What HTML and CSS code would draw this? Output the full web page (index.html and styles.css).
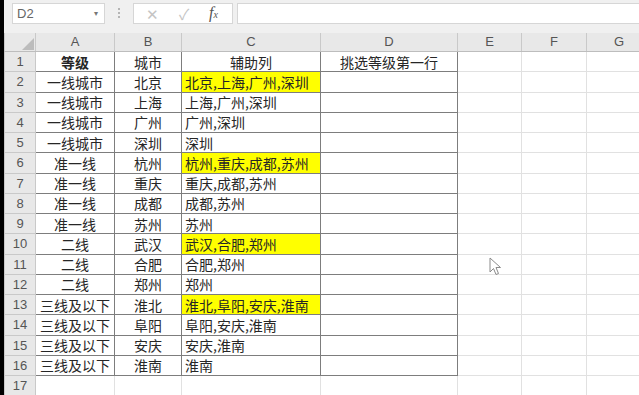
FILE: index.html
```html
<!DOCTYPE html>
<html lang="zh-CN">
<head>
  <meta charset="UTF-8">
  <link rel="stylesheet" href="styles.css">
  <title>等级筛选</title>
</head>
<body>
  <div class="app">
    <div class="toolbar">
      <div class="namebox">D2<span class="caret">&#9662;</span></div>
      <div class="dots"><i></i><i></i><i></i></div>
      <div class="fbtns">
        <span class="fx-btn grey">&#10005;</span>
        <span class="fx-btn grey">&#10003;</span>
        <span class="fx-btn fx"><i>f</i><sub>x</sub></span>
      </div>
      <div class="finput"></div>
    </div>

    <table class="sheet">
      <colgroup>
        <col style="width:31px"><col style="width:79px"><col style="width:67px"><col style="width:139px">
        <col style="width:137px"><col style="width:64px"><col style="width:65px"><col style="width:65px">
      </colgroup>
      <thead>
        <tr>
          <th class="corner"><span class="tri"></span></th>
          <th>A</th><th>B</th><th>C</th><th>D</th><th>E</th><th>F</th><th>G</th>
        </tr>
      </thead>
      <tbody id="rows"></tbody>
    </table>

    <svg class="cursor" width="14" height="20" viewBox="0 0 14 20">
      <path d="M1 1 L1 15 L4.5 11.5 L7 17.5 L9.5 16.5 L7 10.5 L11.5 10.5 Z" fill="#fff" stroke="#8a8a8a" stroke-width="1"/>
    </svg>
  </div>

  <script>
    const data = [
      ['等级', '城市', '辅助列', '挑选等级第一行'],
      ['一线城市', '北京', '北京,上海,广州,深圳', ''],
      ['一线城市', '上海', '上海,广州,深圳', ''],
      ['一线城市', '广州', '广州,深圳', ''],
      ['一线城市', '深圳', '深圳', ''],
      ['准一线', '杭州', '杭州,重庆,成都,苏州', ''],
      ['准一线', '重庆', '重庆,成都,苏州', ''],
      ['准一线', '成都', '成都,苏州', ''],
      ['准一线', '苏州', '苏州', ''],
      ['二线', '武汉', '武汉,合肥,郑州', ''],
      ['二线', '合肥', '合肥,郑州', ''],
      ['二线', '郑州', '郑州', ''],
      ['三线及以下', '淮北', '淮北,阜阳,安庆,淮南', ''],
      ['三线及以下', '阜阳', '阜阳,安庆,淮南', ''],
      ['三线及以下', '安庆', '安庆,淮南', ''],
      ['三线及以下', '淮南', '淮南', '']
    ];
    // rows where the helper column is marked yellow
    const marked = [2, 6, 10, 13];

    const tbody = document.getElementById('rows');
    for (let r = 1; r <= 17; r++) {
      const tr = document.createElement('tr');
      const th = document.createElement('th');
      th.className = 'rownum';
      th.textContent = r;
      tr.appendChild(th);
      const row = data[r - 1] || ['', '', '', ''];
      for (let c = 0; c < 7; c++) {
        const td = document.createElement('td');
        if (c < 4 && r <= 16) {
          td.className = 'box col' + c;
          td.textContent = row[c];
          if (r === 1) td.classList.add('title');
          if (r === 1 && c === 0) td.classList.add('bold');
          if (c === 2 && marked.includes(r)) td.classList.add('hl');
        }
        tr.appendChild(td);
      }
      tbody.appendChild(tr);
    }
  </script>
</body>
</html>
```

FILE: styles.css
```css
body {
  margin: 0;
  background: #000;
  overflow: hidden;
}

.app {
  position: relative;
  margin-left: 4px;
  height: 395px;
  background: #fff;
  font-family: "Noto Sans CJK SC", "Liberation Sans", sans-serif;
}

.toolbar {
  display: flex;
  align-items: flex-start;
  height: 33px;
  box-sizing: border-box;
  padding: 3px 0 0 8px;
  background: #f0f0f0;
}

.namebox {
  position: relative;
  width: 93px;
  height: 21px;
  box-sizing: border-box;
  border: 1px solid #d6d6d6;
  background: #fff;
  color: #666;
  font-family: "Liberation Sans", sans-serif;
  font-size: 13px;
  line-height: 19px;
  padding-left: 4px;
}

.caret {
  position: absolute;
  right: 6px;
  top: 0;
  font-size: 8px;
  color: #777;
}

.dots {
  display: flex;
  flex-direction: column;
  gap: 2px;
  width: 28px;
  align-items: center;
  padding-top: 5px;
}

.dots i {
  width: 2px;
  height: 2px;
  background: #b5b5b5;
}

.fbtns {
  display: flex;
  align-items: center;
  justify-content: space-around;
  width: 100px;
  height: 21px;
  box-sizing: border-box;
  border: 1px solid #d6d6d6;
  background: #fff;
  padding: 0 4px 0 2px;
}

.fx-btn {
  font-size: 15px;
  line-height: 19px;
}

.grey {
  color: #c4c4c4;
}

.fx {
  font-family: "Liberation Serif", serif;
  color: #555;
  font-size: 16px;
}

.fx sub {
  font-size: 10px;
  font-style: italic;
  vertical-align: 0;
}

.finput {
  flex: 1;
  margin-left: 4px;
  height: 21px;
  box-sizing: border-box;
  border: 1px solid #d6d6d6;
  border-right: none;
  background: #fff;
}

.sheet {
  border-collapse: collapse;
  table-layout: fixed;
  width: 647px;
}

.sheet th {
  background: #e8e8e8;
  color: #555;
  font-family: "Liberation Sans", sans-serif;
  font-weight: normal;
  font-size: 13px;
  padding: 0;
  border: 1px solid #c9c9c9;
}

.sheet thead th {
  height: 17px;
  border-top: none;
  border-bottom: 1px solid #bdbdbd;
  text-align: center;
  line-height: 16px;
}

.sheet thead th.corner {
  text-align: right;
  vertical-align: bottom;
  padding: 0 1px 1px 0;
  line-height: 0;
}

.tri {
  display: inline-block;
  width: 0;
  height: 0;
  border-left: 12px solid transparent;
  border-bottom: 12px solid #bcbcbc;
}

.sheet tbody tr {
  height: 20.25px;
}

.rownum {
  text-align: center;
  border-left: none;
}

.sheet td {
  border: 1px solid #e1e1e1;
  padding: 0 3px;
  font-size: 14px;
  color: #262626;
  white-space: nowrap;
  overflow: hidden;
  line-height: 18px;
}

.sheet td.box {
  border-color: #7d7d7d;
}

.col0, .col1, .col3 {
  text-align: center;
}

.col2 {
  text-align: left;
}

.sheet td.title {
  text-align: center;
}

.bold {
  font-weight: bold;
}

.hl {
  background: #ffff00;
}

.cursor {
  position: absolute;
  left: 485px;
  top: 257px;
}
```
